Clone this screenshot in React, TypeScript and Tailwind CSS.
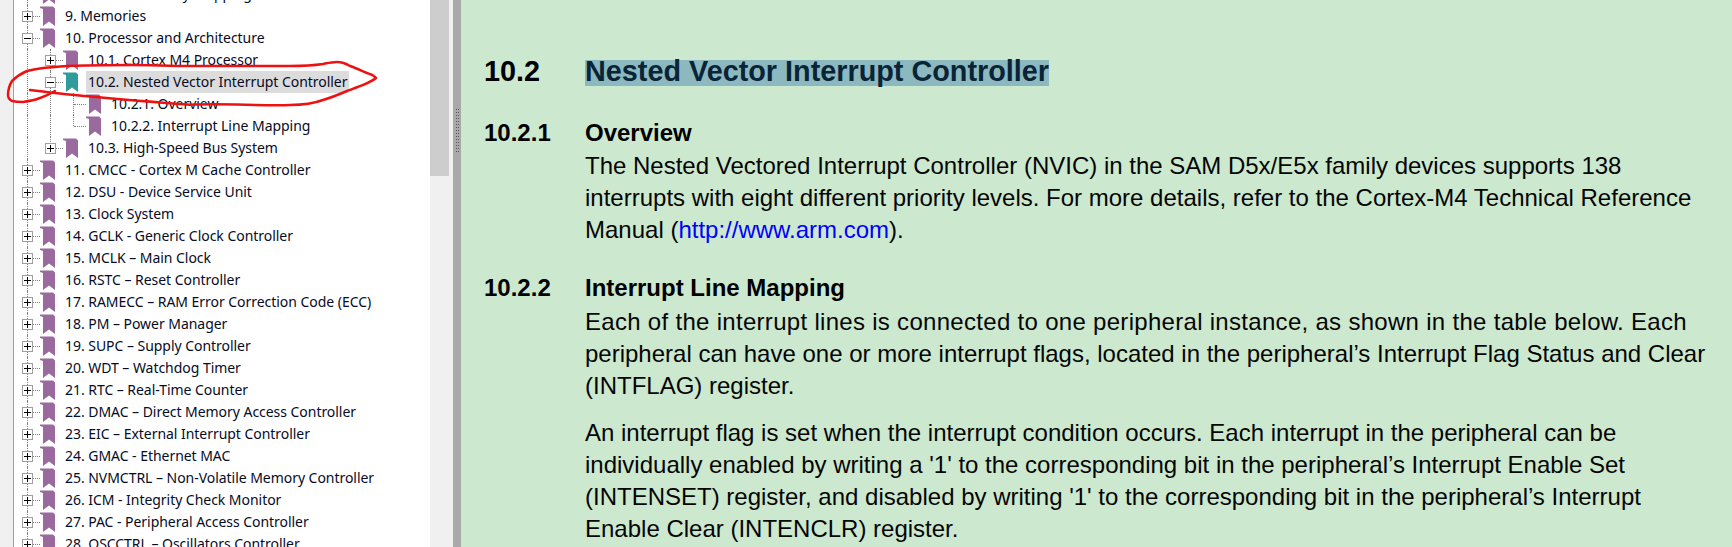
const navy = "text-[#060b26]";

type Node = { label: string; level: 0 | 1 | 2; state?: "plus" | "minus" | "leaf"; selected?: boolean; last?: boolean };

const nodes: Node[] = [
  { label: "8. Product Memory Mapping", level: 0, state: "plus" },
  { label: "9. Memories", level: 0, state: "plus" },
  { label: "10. Processor and Architecture", level: 0, state: "minus" },
  { label: "10.1. Cortex M4 Processor", level: 1, state: "plus" },
  { label: "10.2. Nested Vector Interrupt Controller", level: 1, state: "minus", selected: true },
  { label: "10.2.1. Overview", level: 2, state: "leaf" },
  { label: "10.2.2. Interrupt Line Mapping", level: 2, state: "leaf", last: true },
  { label: "10.3. High-Speed Bus System", level: 1, state: "plus", last: true },
  { label: "11. CMCC - Cortex M Cache Controller", level: 0, state: "plus" },
  { label: "12. DSU - Device Service Unit", level: 0, state: "plus" },
  { label: "13. Clock System", level: 0, state: "plus" },
  { label: "14. GCLK - Generic Clock Controller", level: 0, state: "plus" },
  { label: "15. MCLK – Main Clock", level: 0, state: "plus" },
  { label: "16. RSTC – Reset Controller", level: 0, state: "plus" },
  { label: "17. RAMECC – RAM Error Correction Code (ECC)", level: 0, state: "plus" },
  { label: "18. PM – Power Manager", level: 0, state: "plus" },
  { label: "19. SUPC – Supply Controller", level: 0, state: "plus" },
  { label: "20. WDT – Watchdog Timer", level: 0, state: "plus" },
  { label: "21. RTC – Real-Time Counter", level: 0, state: "plus" },
  { label: "22. DMAC – Direct Memory Access Controller", level: 0, state: "plus" },
  { label: "23. EIC – External Interrupt Controller", level: 0, state: "plus" },
  { label: "24. GMAC - Ethernet MAC", level: 0, state: "plus" },
  { label: "25. NVMCTRL – Non-Volatile Memory Controller", level: 0, state: "plus" },
  { label: "26. ICM - Integrity Check Monitor", level: 0, state: "plus" },
  { label: "27. PAC - Peripheral Access Controller", level: 0, state: "plus" },
  { label: "28. OSCCTRL – Oscillators Controller", level: 0, state: "plus" },
];

function Bookmark({ teal }: { teal?: boolean }) {
  return (
    <svg width="15" height="20" viewBox="0 0 15 20" className="relative shrink-0">
      <path d="M0 0.5H13L15 2.5V20L9 15.5L3 20V3L0 2Z" fill={teal ? "#2f9c9b" : "#9a699d"} />
    </svg>
  );
}

function Guide() {
  return (
    <div className="h-full w-[23px] shrink-0 pl-[11px]">
      <div className="h-full border-l border-dotted border-[#808080]" />
    </div>
  );
}

function Expander({ state, last }: { state: "plus" | "minus"; last?: boolean }) {
  return (
    <div className="relative flex h-full w-[24px] shrink-0 items-center pl-[6px]">
      <div className={`absolute top-0 left-[11px] border-l border-dotted border-[#808080] ${last ? "h-1/2" : "h-full"}`} />
      <div className="relative flex h-[11px] w-[11px] shrink-0 items-center justify-center border border-[#a0a0a0] bg-white">
        <div className="h-px w-[7px] bg-black" />
        {state === "plus" && <div className="absolute h-[7px] w-px bg-black" />}
      </div>
      <div className="w-[7px] border-t border-dotted border-[#808080]" />
    </div>
  );
}

function Leaf({ last }: { last?: boolean }) {
  return (
    <div className="flex h-full w-[24px] shrink-0 pl-[11px]">
      <div className={`border-l border-dotted border-[#808080] ${last ? "h-1/2" : "h-full"}`} />
      <div className="mt-[11px] h-0 w-[12px] border-t border-dotted border-[#808080]" />
    </div>
  );
}

function TreeRow({ node }: { node: Node }) {
  return (
    <div className="flex h-[22px] items-center pl-[2px]">
      {node.level >= 1 && <Guide />}
      {node.level === 2 && <Guide />}
      {node.state === "leaf" ? (
        <Leaf last={node.last} />
      ) : (
        <Expander state={node.state ?? "plus"} last={node.last} />
      )}
      <Bookmark teal={node.selected} />
      <span
        className={`ml-[8px] whitespace-nowrap px-[2px] leading-[22px] tracking-[-0.04px] ${navy} ${node.selected ? "bg-[#dcdcdc]" : ""}`}
      >
        {node.label}
      </span>
    </div>
  );
}

function BodyText({ children, className = "" }: { children: React.ReactNode; className?: string }) {
  return <p className={`ml-[101px] text-[24px] leading-[32px] whitespace-nowrap text-[#050505] ${className}`}>{children}</p>;
}

function SubHeading({ num, title, className = "" }: { num: string; title: string; className?: string }) {
  return (
    <div className={`flex text-[24px] leading-[28px] font-bold text-black ${className}`}>
      <span className="w-[101px] shrink-0">{num}</span>
      <span>{title}</span>
    </div>
  );
}

export default function App() {
  return (
    <div className="relative flex h-[547px] w-[1732px] overflow-hidden bg-[#cce8cf] font-['Liberation_Sans',sans-serif]">
      {/* left strip */}
      <div className="h-full w-[14px] shrink-0 border-r border-[#a0a0a0] bg-[#f0f0f0]" />

      {/* bookmark tree */}
      <div className="h-full w-[416px] shrink-0 overflow-hidden bg-white font-['Noto_Sans',sans-serif] text-[14px]">
        <div className="-mt-[17px]">
          {nodes.map((n) => (
            <TreeRow key={n.label} node={n} />
          ))}
        </div>
      </div>

      {/* scrollbar */}
      <div className="h-full w-[23px] shrink-0 bg-[#f0f0f0]">
        <div className="h-[176px] w-[19px] bg-[#cdcdcd]" />
      </div>

      {/* splitter */}
      <div className="h-full w-[8px] shrink-0 bg-[#a9a9a9] pt-[109px] pl-[3px]">
        <div className="grid w-[3px] grid-cols-2 gap-x-px gap-y-[2px]">
          {Array.from({ length: 30 }, (_, i) => (
            <div key={i} className="h-px w-px bg-[#555555]" />
          ))}
        </div>
      </div>

      {/* document page */}
      <div className="h-full min-w-0 flex-1 pt-[55px] pl-[23px]">
        <div className="flex text-[28.8px] leading-[32px] font-bold text-black">
          <span className="w-[101px] shrink-0">10.2</span>
          <span className="mt-[5px] h-[26px] bg-[#8cb9bf] leading-[22px] text-[#0a2437]">
            Nested Vector Interrupt Controller
          </span>
        </div>

        <SubHeading num="10.2.1" title="Overview" className="mt-[32px]" />
        <BodyText className="mt-[3px]">
          The Nested Vectored Interrupt Controller (NVIC) in the SAM D5x/E5x family devices supports 138
          <br />
          interrupts with eight different priority levels. For more details, refer to the Cortex-M4 Technical Reference
          <br />
          Manual (<span className="text-[#0000ff]">http://www.arm.com</span>).
        </BodyText>

        <SubHeading num="10.2.2" title="Interrupt Line Mapping" className="mt-[28px]" />
        <BodyText className="mt-[4px]">
          <span className="tracking-[0.3px]">
            Each of the interrupt lines is connected to one peripheral instance, as shown in the table below. Each
          </span>
          <br />
          peripheral can have one or more interrupt flags, located in the peripheral’s Interrupt Flag Status and Clear
          <br />
          (INTFLAG) register.
        </BodyText>
        <BodyText className="mt-[15px]">
          An interrupt flag is set when the interrupt condition occurs. Each interrupt in the peripheral can be
          <br />
          individually enabled by writing a '1' to the corresponding bit in the peripheral’s Interrupt Enable Set
          <br />
          (INTENSET) register, and disabled by writing '1' to the corresponding bit in the peripheral’s Interrupt
          <br />
          Enable Clear (INTENCLR) register.
        </BodyText>
      </div>

      {/* red pen annotation */}
      <svg width="400" height="120" viewBox="0 0 400 120" className="pointer-events-none absolute top-0 left-0">
        <path
          d="M30 90C60 94 100 98 190 104.7C223 103 260 106 290 105C305 105 315 103 323 100C333 97 340 94 347 91C355 88 370 83 376 78C374 75 370 74 367 73C360 70 356 68 350 66C345 63 341 62 337 62C332 62 328 63 323 64C310 66 300 66 290 66C275 66 265 66 253 66C230 66 210 66 190 66C170 66 150 65 133 65C110 65 90 65 67 66C50 67 38 68 27 71C20 74 16 77 12 81C9 86 8 90 8 95C8 98 10 100 12 101C16 102 19 102 23 102C30 101 35 100 40 98C46 96 50 94 55 91"
          fill="none"
          stroke="#ee1111"
          strokeWidth="2.5"
          strokeLinecap="round"
          strokeLinejoin="round"
        />
      </svg>
    </div>
  );
}
